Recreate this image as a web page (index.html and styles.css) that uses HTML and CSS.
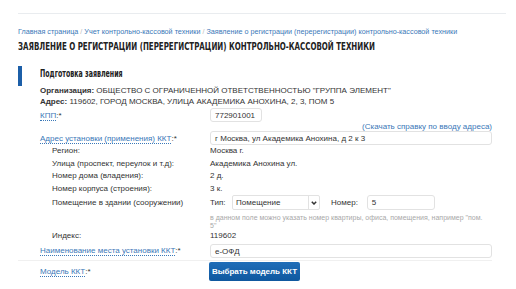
FILE: index.html
```html
<!DOCTYPE html>
<html lang="ru">
<head>
    <meta charset="UTF-8">
    <meta name="viewport" content="width=device-width, initial-scale=1.0">
    <title>Заявление о регистрации ККТ</title>
    <link rel="stylesheet" href="styles.css">
</head>
<body>
    <div class="page">
        <div class="top-line"></div>
        <div class="breadcrumbs">
            <a href="#">Главная страница</a> <span class="sep">/</span>
            <a href="#">Учет контрольно-кассовой техники</a> <span class="sep">/</span>
            <a href="#">Заявление о регистрации (перерегистрации) контрольно-кассовой техники</a>
        </div>
        <h1 class="title">Заявление о регистрации (перерегистрации) контрольно-кассовой техники</h1>

        <div class="section">
            <div class="section-head">
                <div class="marker"></div>
                <h2>Подготовка заявления</h2>
            </div>

            <div class="form">
                <div class="info"><b>Организация:</b> ОБЩЕСТВО С ОГРАНИЧЕННОЙ ОТВЕТСТВЕННОСТЬЮ "ГРУППА ЭЛЕМЕНТ"</div>
                <div class="info"><b>Адрес:</b> 119602, ГОРОД МОСКВА, УЛИЦА АКАДЕМИКА АНОХИНА, 2, 3, ПОМ 5</div>

                <div class="row row-kpp">
                    <span class="label"><a href="#">КПП</a><span class="req">:*</span></span>
                    <div class="input input-short">772901001</div>
                </div>
                <div class="help"><a href="#">(Скачать справку по вводу адреса)</a></div>
                <div class="row">
                    <span class="label"><a href="#">Адрес установки (применения) ККТ</a><span class="req">:*</span></span>
                    <div class="input">г Москва, ул Академика Анохина, д 2 к 3</div>
                </div>
                <div class="row sub">
                    <span class="label">Регион:</span>
                    <span>Москва г.</span>
                </div>
                <div class="row sub">
                    <span class="label">Улица (проспект, переулок и т.д):</span>
                    <span>Академика Анохина ул.</span>
                </div>
                <div class="row sub">
                    <span class="label">Номер дома (владения):</span>
                    <span>2 д.</span>
                </div>
                <div class="row sub">
                    <span class="label">Номер корпуса (строения):</span>
                    <span>3 к.</span>
                </div>
                <div class="row sub row-room">
                    <span class="label">Помещение в здании (сооружении)</span>
                    <div class="room">
                        <span class="room-caption">Тип:</span>
                        <div class="select">
                            <span>Помещение</span>
                            <span class="select-arrow">
                                <svg width="6" height="4" viewBox="0 0 6 4"><path d="M0.8 0.8l2.2 2.2 2.2-2.2" fill="none" stroke="#333" stroke-width="1.5"/></svg>
                            </span>
                        </div>
                        <span class="room-caption num">Номер:</span>
                        <div class="input input-num">5</div>
                    </div>
                </div>
                <div class="row row-hint">
                    <span></span>
                    <span class="hint">в данном поле можно указать номер квартиры, офиса, помещения, например "пом. 5"</span>
                </div>
                <div class="row sub">
                    <span class="label">Индекс:</span>
                    <span>119602</span>
                </div>
                <div class="row row-place">
                    <span class="label"><a href="#">Наименование места установки ККТ</a><span class="req">:*</span></span>
                    <div class="input">е-ОФД</div>
                </div>
                <div class="divider"></div>
                <div class="row row-model">
                    <span class="label"><a href="#">Модель ККТ</a><span class="req">:*</span></span>
                    <div><button type="button" class="btn">Выбрать модель ККТ</button></div>
                </div>
            </div>
        </div>
    </div>
</body>
</html>
```

FILE: styles.css
```css
body{
    margin: 0;
    background: #fff;
    font-family: "Liberation Sans", Arial, sans-serif;
    font-size: 8px;
    color: #333;
}
a{
    color: #3a78b8;
    text-decoration: none;
}
.page{
    padding: 13px 24px 0 18px;
}
.top-line{
    height: 1px;
    background: #e9ecef;
    margin-right: -14px;
}
.breadcrumbs{
    margin-top: 13px;
    font-size: 7.2px;
    line-height: 10px;
    white-space: nowrap;
}
.breadcrumbs .sep{
    color: #bbb;
}
.title{
    margin: 3px 0 0;
    font-family: "Liberation Sans Narrow", "DejaVu Sans Condensed", sans-serif;
    font-size: 11px;
    line-height: 14px;
    font-weight: bold;
    text-transform: uppercase;
    color: #222;
    white-space: nowrap;
    transform: scaleX(0.715);
    transform-origin: left center;
}
.section{
    margin-top: 12px;
}
.section-head{
    display: flex;
    align-items: flex-start;
    height: 20px;
}
.marker{
    width: 4px;
    height: 20px;
    background: #1c5fa8;
    margin-right: 18px;
}
.section-head h2{
    margin: 0;
    padding-top: 2px;
    font-family: "Liberation Sans Narrow", "DejaVu Sans Condensed", sans-serif;
    font-size: 10px;
    line-height: 12px;
    font-weight: bold;
    color: #222;
    white-space: nowrap;
    transform: scaleX(0.7);
    transform-origin: left center;
}
.form{
    padding-left: 22px;
}
.info{
    line-height: 11px;
}
.info:first-child{
    margin-top: -1px;
}
.row{
    display: grid;
    grid-template-columns: 170px 1fr;
    align-items: center;
}
.row .label .req{
    color: #333;
}
.row .label a{
    border-bottom: 1px dotted #3a78b8;
}
.row-kpp{
    margin-top: 1px;
}
.input{
    height: 14px;
    line-height: 14px;
    border: 1px solid #e2e2e2;
    border-radius: 3px;
    padding: 0 4px;
    box-sizing: border-box;
    color: #333;
}
.input-short{
    width: 52px;
}
.help{
    text-align: right;
    line-height: 9px;
    height: 9px;
}
.sub{
    height: 12.5px;
    line-height: 12px;
}
.sub .label{
    padding-left: 12px;
}
.row-room{
    height: 15px;
}
.room{
    display: flex;
    align-items: center;
}
.room-caption{
    width: 22px;
}
.room-caption.num{
    width: auto;
    margin: 0 9px 0 11px;
}
.select{
    width: 88px;
    height: 15px;
    border: 1px solid #e2e2e2;
    border-radius: 2px;
    box-sizing: border-box;
    display: flex;
    align-items: center;
    padding-left: 3px;
}
.select span:first-child{
    flex: 1;
}
.select-arrow{
    width: 10px;
    height: 13px;
    border-left: 1px solid #e2e2e2;
    display: flex;
    align-items: center;
    justify-content: center;
}
.input-num{
    width: 68px;
    height: 15px;
}
.hint{
    color: #a8a8a8;
    font-size: 7px;
    line-height: 7.5px;
    padding: 4px 6px 1px 0;
}
.row-place{
    margin-top: 1px;
}
.divider{
    height: 1px;
    background: #f0f0f0;
    margin: 2px 0 1px -22px;
}
.row-model{
    height: 20px;
}
.btn{
    height: 19px;
    width: 91px;
    margin-left: -1px;
    border: 0;
    border-radius: 2px;
    background: linear-gradient(#1f6db8, #0f589f);
    color: #fff;
    font-family: "Liberation Sans", Arial, sans-serif;
    font-size: 8px;
    font-weight: bold;
    padding: 0;
}
```
